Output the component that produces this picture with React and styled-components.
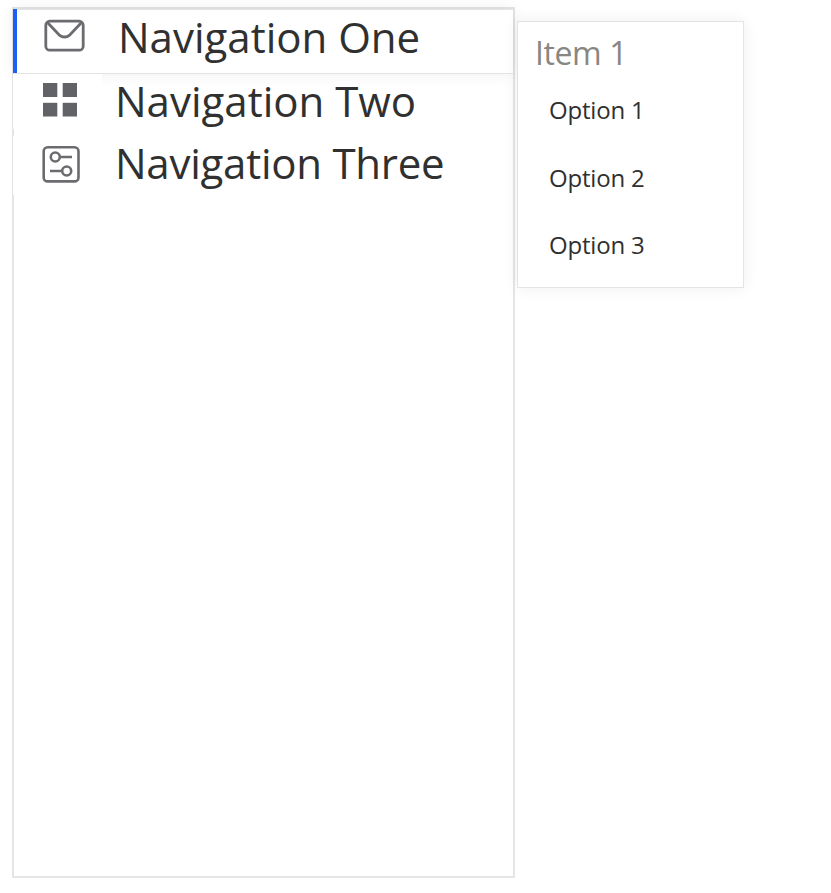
import React from "react";
import styled, { createGlobalStyle } from "styled-components";

const GlobalStyle = createGlobalStyle`
  * { box-sizing: border-box; }
  html, body { margin: 0; background: #fff; }
  body { font-family: "Open Sans", "Noto Sans", sans-serif; color: #303030; overflow: hidden; }
`;

const Page = styled.main`
  display: flex;
  align-items: flex-start;
  gap: 2px;
  height: 893px;
  padding: 7px 0 0 12px;
`;

const Sidebar = styled.nav`
  display: flex;
  flex-direction: column;
  width: 503px;
  height: 871px;
  border: 2px solid #e5e5e5;
`;

const NavRow = styled.a`
  display: flex;
  height: 62px;
  margin-left: -1px;
`;

const ActiveRow = styled(NavRow)`
  height: 65px;
  border-top: 1px solid #e4e4e4;
  border-bottom: 1px solid #e4e4e4;
  box-shadow: 0 0 15px rgba(0, 0, 0, 0.07);

  &::before {
    content: "";
    width: 4px;
    height: 64px;
    margin-top: -1px;
    background: #1b5ff5;
  }
`;

const IconCell = styled.span`
  position: relative;
  flex: none;
  width: ${(p) => p.$width}px;
  height: ${(p) => p.$height}px;
  background: #fff;

  svg { display: block; }
`;

const NavLabel = styled.span`
  padding-left: ${(p) => p.$indent}px;
  margin-top: -2px;
  font-size: 42px;
  line-height: 58px;
  letter-spacing: ${(p) => p.$spacing}px;
  white-space: nowrap;
`;

const Submenu = styled.section`
  width: 227px;
  height: 267px;
  margin-top: 14px;
  border: 1px solid #e4e4e4;
  background: #fff;
  box-shadow: 0 0 15px rgba(0, 0, 0, 0.07);
`;

const SubmenuTitle = styled.h2`
  margin: 9px 0 0 17px;
  color: #888683;
  font-size: 32px;
  font-weight: 400;
  line-height: 44px;
  letter-spacing: -0.4px;
`;

const OptionList = styled.ul`
  margin: 0;
  padding: 1px 0 0 31px;
  list-style: none;
`;

const Option = styled.li`
  height: 67.5px;
  font-size: 24px;
  line-height: 67px;
  letter-spacing: -0.2px;
`;

const MailIcon = () => (
  <svg width="85" height="63" viewBox="17 10 85 63" fill="none" stroke="#6b6c70" strokeWidth="2.8">
    <rect x="45.8" y="21.2" width="37.4" height="29" rx="4" />
    <path d="M47 22L59 34.8Q64.5 39.2 70 34.8L82 22" />
  </svg>
);

const GridIcon = () => (
  <svg width="89" height="55" viewBox="13 74 89 55" fill="#626367">
    <rect x="43" y="83" width="14.3" height="14" />
    <rect x="62.7" y="83" width="14.3" height="14" />
    <rect x="43" y="102.8" width="14.3" height="13.7" />
    <rect x="62.7" y="102.8" width="14.3" height="13.7" />
  </svg>
);

const SettingsIcon = () => (
  <svg width="89" height="59" viewBox="13 136 89 59" fill="none" stroke="#6b6c70" strokeWidth="2.6">
    <rect x="43.7" y="147.2" width="34.8" height="34.2" rx="4" />
    <circle cx="55.3" cy="157" r="4.5" />
    <path d="M60 157H72M50 171H62" />
    <circle cx="66.7" cy="171" r="4.5" />
  </svg>
);

export default function App() {
  return (
    <Page>
      <GlobalStyle />
      <Sidebar>
        <ActiveRow>
          <IconCell $width={85} $height={63}><MailIcon /></IconCell>
          <NavLabel $indent={16} $spacing={0}>Navigation One</NavLabel>
        </ActiveRow>
        <NavRow>
          <IconCell $width={89} $height={55}><GridIcon /></IconCell>
          <NavLabel $indent={13} $spacing={0}>Navigation Two</NavLabel>
        </NavRow>
        <NavRow>
          <IconCell $width={89} $height={59}><SettingsIcon /></IconCell>
          <NavLabel $indent={13} $spacing={-0.25}>Navigation Three</NavLabel>
        </NavRow>
      </Sidebar>
      <Submenu>
        <SubmenuTitle>Item 1</SubmenuTitle>
        <OptionList>
          <Option>Option 1</Option>
          <Option>Option 2</Option>
          <Option>Option 3</Option>
        </OptionList>
      </Submenu>
    </Page>
  );
}
